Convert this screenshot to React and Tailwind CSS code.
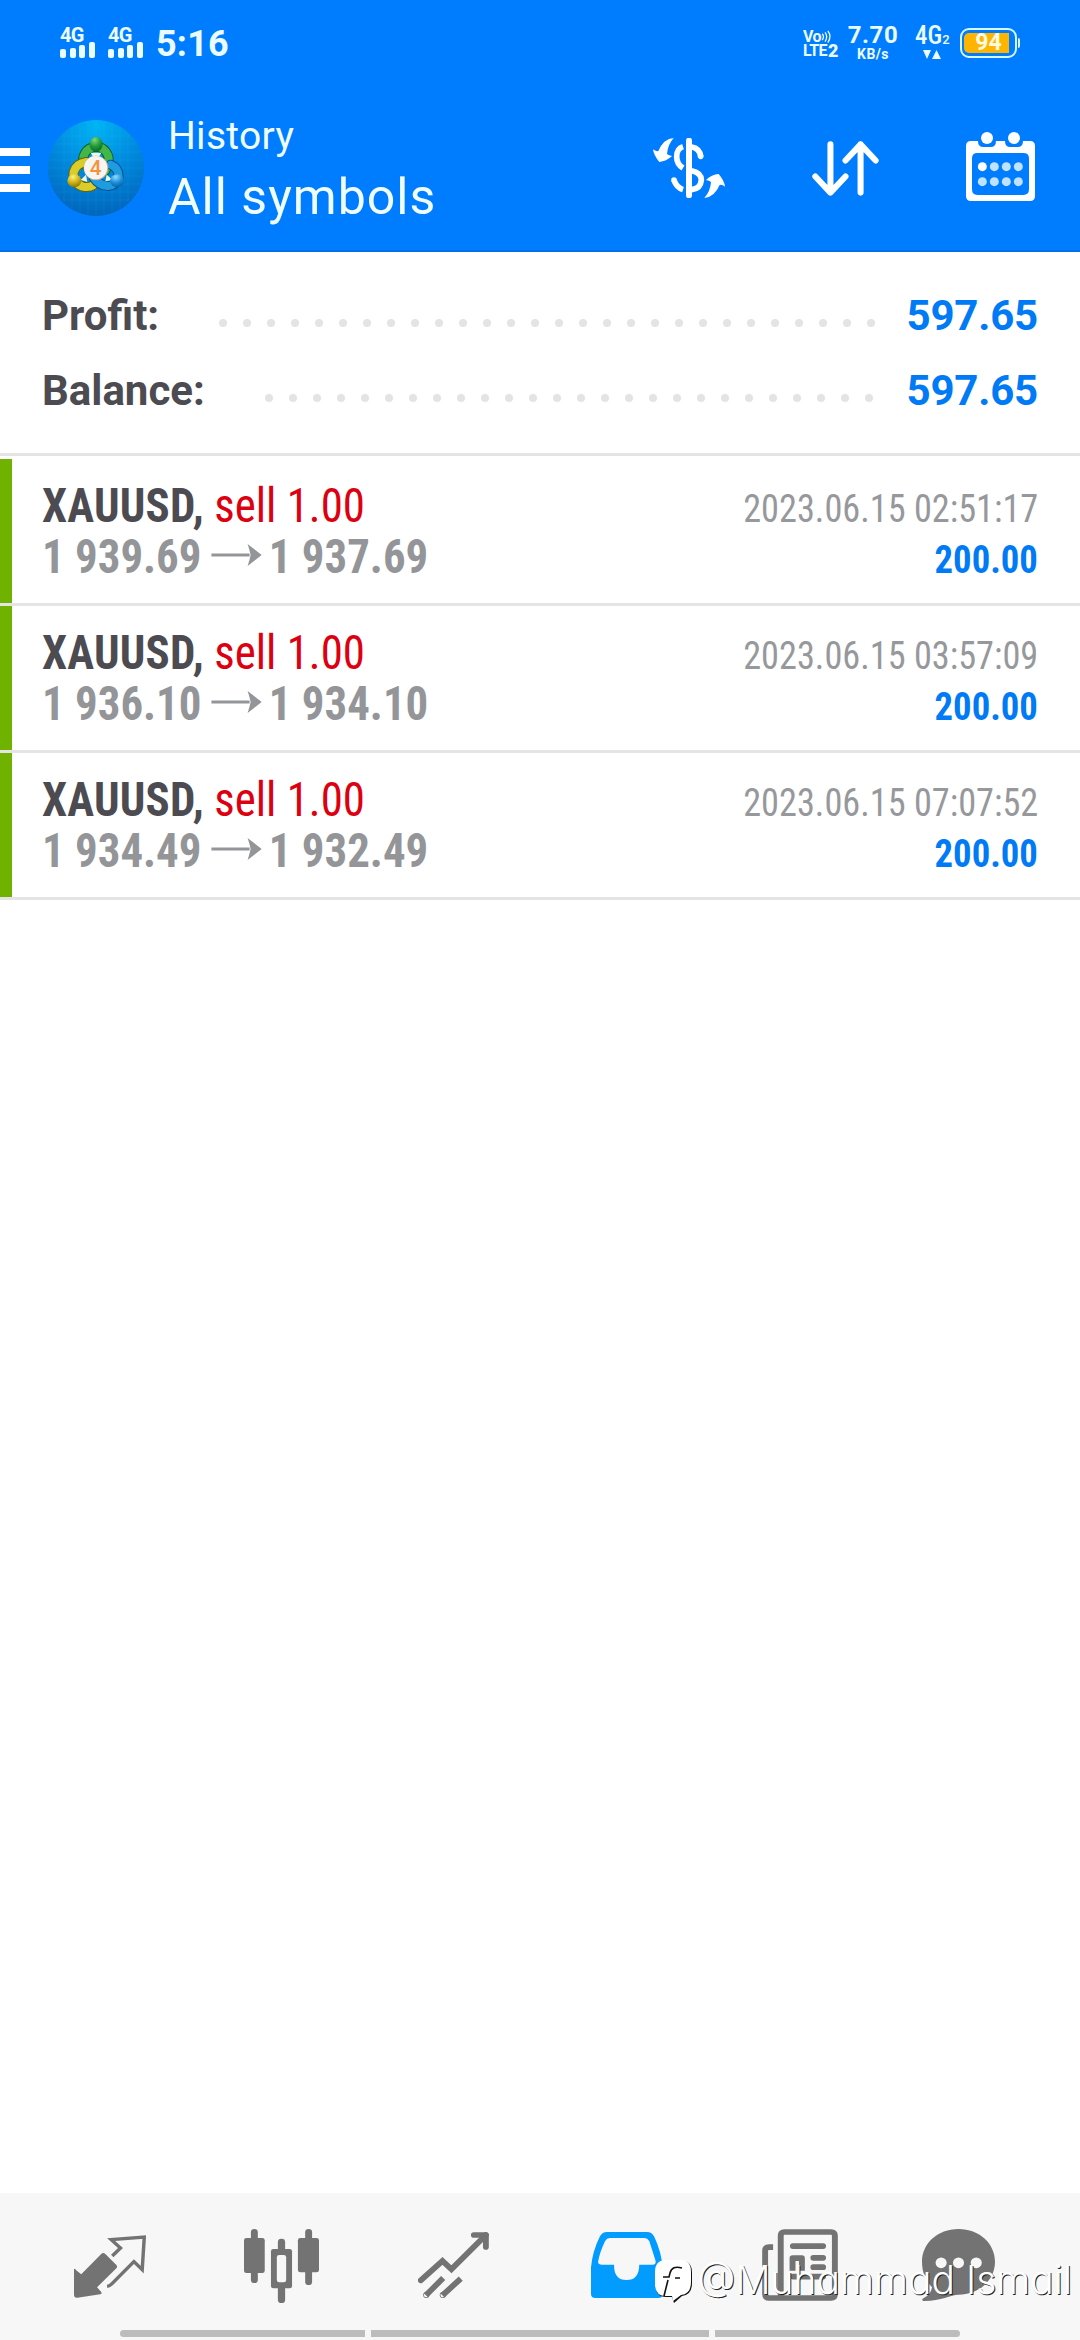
import React from 'react';

const SUMMARY = [
  { label: 'Profit:', value: '597.65', dots: 28 },
  { label: 'Balance:', value: '597.65', dots: 26 },
];

const DEALS = [
  { symbol: 'XAUUSD', side: 'sell', volume: '1.00', open: '1 939.69', close: '1 937.69', time: '2023.06.15 02:51:17', profit: '200.00' },
  { symbol: 'XAUUSD', side: 'sell', volume: '1.00', open: '1 936.10', close: '1 934.10', time: '2023.06.15 03:57:09', profit: '200.00' },
  { symbol: 'XAUUSD', side: 'sell', volume: '1.00', open: '1 934.49', close: '1 932.49', time: '2023.06.15 07:07:52', profit: '200.00' },
];

/* ── Status bar ── */

const Signal = () => (
  <div className="flex w-[35px] flex-col">
    <span className="h-[14px] text-[20px] leading-[14px] font-bold tracking-[-0.6px]">4G</span>
    <div className="flex h-4 items-end justify-between">
      <i className="h-[9px] w-1.5 rounded-xs bg-[#eafcff]" />
      <i className="h-[10px] w-1.5 rounded-xs bg-[#eafcff]" />
      <i className="h-[13px] w-1.5 rounded-xs bg-[#eafcff]" />
      <i className="h-4 w-1.5 rounded-xs bg-[#eafcff]" />
    </div>
  </div>
);

const Battery = () => (
  <div className="flex items-center gap-px">
    <div className="flex h-[30px] w-[57px] items-center rounded-[9px] border-2 border-[#d8f6ff] p-[2px]">
      <div className="flex h-5 w-[45px] items-center justify-center rounded-l-[5px] bg-[#ffb400] pl-1 text-[23px] font-bold text-[#fffbe0]">
        94
      </div>
    </div>
    <div className="h-2.5 w-[2px] rounded-r bg-[#d8f6ff]" />
  </div>
);

const StatusBar = () => (
  <div className="flex h-[84px] items-center pt-[2px] pr-[60px] pl-[60px] text-[#eafcff]">
    <Signal />
    <div className="w-[13px]" />
    <Signal />
    <span className="mt-px ml-[13px] text-[36px] font-bold tracking-[0.2px]">5:16</span>

    <div className="ml-auto flex items-center">
      <div className="flex w-[38px] flex-col">
        <div className="flex h-[14px] items-center">
          <span className="text-[16px] leading-[14px] font-bold tracking-[-0.6px]">Vo</span>
          <svg viewBox="0 0 10 14" className="h-[13px] w-2.5" fill="none" stroke="currentColor" strokeWidth="1.4">
            <path d="M1 4q2.500 3 0 7M4 2.500q3.500 4.500 0 10M7 1q4.500 6 0 12.500" />
          </svg>
        </div>
        <div className="flex h-[13px] items-center font-bold">
          <span className="text-[16px] leading-[13px] tracking-[-0.6px]">LTE</span>
          <span className="ml-px text-[18px] leading-[13px] font-black">2</span>
        </div>
      </div>
      <div className="ml-[8px] flex w-[48px] flex-col items-center">
        <span className="h-5 text-[24px] leading-5 font-bold tracking-[0.6px]">7.70</span>
        <span className="h-[17px] pt-[2px] text-[14px] leading-[14px] font-bold tracking-[0.4px]">KB/s</span>
      </div>
      <div className="ml-[18px] flex w-[35px] flex-col">
        <div className="flex h-5 items-baseline leading-5">
          <span className="text-[25px] leading-5 font-medium font-stretch-[85%]">4G</span>
          <span className="text-[13px] leading-5 font-medium">2</span>
        </div>
        <svg viewBox="0 0 18 10" className="mt-[4px] ml-[8px] h-2.5 w-[18px]" fill="currentColor">
          <path d="M0 0h8L4 9zM9 9h9L13.500 0z" />
        </svg>
      </div>
      <div className="ml-[10px]">
        <Battery />
      </div>
    </div>
  </div>
);

/* ── App bar ── */

const Logo = () => (
  <svg viewBox="24 24 288 288" className="size-24">
    <defs>
      <radialGradient id="disc" cx="0.5" cy="0.05" r="1">
        <stop offset="0" stopColor="#00b4f5" />
        <stop offset="0.5" stopColor="#0088dc" />
        <stop offset="1" stopColor="#0062b8" />
      </radialGradient>
      <radialGradient id="green" cx="0.4" cy="0.2" r="0.9">
        <stop offset="0" stopColor="#7fd67a" />
        <stop offset="0.5" stopColor="#1f9a3c" />
        <stop offset="1" stopColor="#05601f" />
      </radialGradient>
      <radialGradient id="yellow" cx="0.4" cy="0.2" r="0.9">
        <stop offset="0" stopColor="#fff27a" />
        <stop offset="0.5" stopColor="#d0b416" />
        <stop offset="1" stopColor="#7d6a00" />
      </radialGradient>
      <radialGradient id="blue" cx="0.4" cy="0.2" r="0.9">
        <stop offset="0" stopColor="#8fdcff" />
        <stop offset="0.5" stopColor="#1e90d8" />
        <stop offset="1" stopColor="#0058a0" />
      </radialGradient>
    </defs>
    <circle cx="168" cy="168" r="144" fill="url(#disc)" />
    <path
      d="M72 66v204M96 46v244M120 34v268M144 28v280M168 24v288M192 28v280M216 34v268M240 46v244M264 66v204M66 72h204M46 96h244M34 120h268M28 144h280M24 168h288M28 192h280M34 216h268M46 240h244M66 264h204"
      stroke="#5cc8ff"
      strokeOpacity="0.14"
      strokeWidth="2"
    />
    <g fill="none" strokeLinecap="round">
      <path d="M133 158a38 38 0 1 1 71 -4q0 10 -8 22" stroke="#0a5a2c" strokeWidth="30" />
      <path d="M133 158a38 38 0 1 1 71 -4q0 10 -8 22" stroke="#43b649" strokeWidth="24" />
      <path d="M139 150q-30 4 -38 30q-5 32 28 44q18 4 30 -4" stroke="#6d6200" strokeWidth="30" />
      <path d="M139 150q-30 4 -38 30q-5 32 28 44q18 4 30 -4" stroke="#d9cd2c" strokeWidth="24" />
      <path d="M212 158q24 10 24 36q-6 26 -32 28q-28 -2 -42 -24" stroke="#07508e" strokeWidth="30" />
      <path d="M212 158q24 10 24 36q-6 26 -32 28q-28 -2 -42 -24" stroke="#1f9be0" strokeWidth="24" />
    </g>
    <path d="M152 122h32l-8 14h-16zM122 204l16 -16 4 22zM196 208l4 -20 18 16z" fill="#e9fbe0" />
    <ellipse cx="168" cy="97" rx="20" ry="22" fill="url(#green)" />
    <ellipse cx="103" cy="206" rx="21" ry="19" fill="url(#yellow)" />
    <ellipse cx="231" cy="206" rx="21" ry="19" fill="url(#blue)" />
    <circle cx="168" cy="168" r="37" fill="#b9a98c" />
    <circle cx="167" cy="167" r="35" fill="#f7f5f2" />
    <text x="167" y="189" textAnchor="middle" fontFamily="Roboto, sans-serif" fontSize="62" fontWeight="500" fill="#f5923e">
      4
    </text>
  </svg>
);

const CurrencyIcon = () => (
  <svg viewBox="72 114 216 180" className="h-[60px] w-[72px]" fill="white">
    <path d="M134 114q-30 2 -46 39q-8 2 -16 -5q2 18 19 38q21 -2 38 -18q-10 -1 -15 -6q2 -28 20 -48z" />
    <path d="M226 294q30 -2 46 -39q8 -2 16 5q-2 -18 -19 -38q-21 2 -38 18q10 1 15 6q-2 28 -20 48z" />
    <path d="M180 122v164" stroke="white" strokeWidth="18" strokeLinecap="round" />
    <path
      d="M162 140q-19 6 -19 30q0 22 19 34M188 141q24 4 27 28M162 269q-19 -6 -27 -28M188 212q29 6 29 28q-2 26 -29 29"
      fill="none"
      stroke="white"
      strokeWidth="17"
    />
    <circle cx="215" cy="169" r="8.500" />
    <circle cx="135" cy="240" r="8.500" />
  </svg>
);

const SortIcon = () => (
  <svg viewBox="548 122 200 164" className="h-[55px] w-[67px]" fill="none" stroke="white" strokeWidth="18" strokeLinecap="round" strokeLinejoin="round">
    <path d="M603 132v144M558 228l45 48 45 -48M693 276V132M648 180l45 -48 45 48" />
  </svg>
);

const CalendarIcon = () => (
  <svg viewBox="1008 96 207 207" className="size-[69px]" fill="white">
    <path
      fillRule="evenodd"
      d="M1023 123h21q0 18 16 18h22q16 0 16 -18h27q0 18 16 18h22q16 0 16 -18h21q15 0 15 15v150q0 15 -15 15h-177q-15 0 -15 -15v-150q0 -15 15 -15zM1042 159q-16 0 -16 16v93q0 17 16 17h138q17 0 17 -17v-93q0 -16 -17 -16z"
    />
    <circle cx="1071" cy="114" r="18" />
    <circle cx="1152" cy="114" r="18" />
    <circle cx="1057" cy="200" r="13.500" />
    <g fill="#bfe3ff">
      <circle cx="1093" cy="200" r="13.500" />
      <circle cx="1129" cy="200" r="13.500" />
      <circle cx="1165" cy="200" r="13.500" />
      <circle cx="1057" cy="245" r="13.500" />
      <circle cx="1093" cy="245" r="13.500" />
      <circle cx="1129" cy="245" r="13.500" />
      <circle cx="1165" cy="245" r="13.500" />
    </g>
  </svg>
);

const AppBar = () => (
  <div className="flex h-[168px] items-center border-b-2 border-[#0070e6] pt-[2px] pr-[45px] text-[#f0fdff]">
    <div className="mt-1 flex w-[30px] flex-col gap-2.5">
      <i className="h-2 bg-white" />
      <i className="h-2 bg-white" />
      <i className="h-2 bg-white" />
    </div>
    <div className="ml-[18px]">
      <Logo />
    </div>
    <div className="mt-[4px] ml-[24px] flex flex-col">
      <span className="text-[39px] leading-[54px] tracking-[0.3px]">History</span>
      <span className="text-[50px] leading-[68px] tracking-[1px]">All symbols</span>
    </div>
    <div className="ml-auto flex items-center">
      <CurrencyIcon />
      <div className="ml-[87px]">
        <SortIcon />
      </div>
      <div className="-mt-[3px] ml-[87px]">
        <CalendarIcon />
      </div>
    </div>
  </div>
);

/* ── Totals with dotted leaders ── */

const SummaryRow = ({ label, value, dots }) => (
  <div className="flex h-[75px] items-center text-[42px] font-bold">
    <span className="text-[#4c4b51]">{label}</span>
    <div className="mt-[15px] ml-[60px] flex gap-4">
      {Array.from({ length: dots }, (_, i) => (
        <i key={i} className="size-2 rounded-full bg-[#e4e4e4]" />
      ))}
    </div>
    <span className="ml-auto text-[#007af5] tracking-[-0.2px]">{value}</span>
  </div>
);

/* ── Deal row ── */

const PriceArrow = () => (
  <svg viewBox="0 0 50 36" preserveAspectRatio="none" className="h-9 w-[54px]" fill="#949599">
    <path d="M0 16.500h38V19.500H0z" />
    <path d="M50 18 36 7q2 6 3 11q-1 5 -3 11z" />
  </svg>
);

const DealRow = ({ deal }) => (
  <div className="flex h-[147px] border-b-3 border-[#e4e4e4]">
    <div className="w-3 bg-[#6fb200]" />
    <div className="flex-1 pt-[21px] pr-[42px] pl-[30px] font-stretch-[75%]">
      <div className="flex h-[51px] items-baseline justify-between text-[48px] leading-[51px]">
        <div className="flex origin-left scale-x-[0.935] items-baseline">
          <span className="font-bold tracking-[0.2px] text-[#4c4b51]">{deal.symbol},</span>
          <span className="ml-[11px] text-[#dc0010]">
            {deal.side} {deal.volume}
          </span>
        </div>
        <span className="origin-right scale-x-[0.93] text-[39px] text-[#97989c]">{deal.time}</span>
      </div>
      <div className="flex h-[51px] items-baseline justify-between text-[48px] leading-[51px] font-bold text-[#949599]">
        <div className="flex origin-left scale-x-[0.935] items-baseline">
          <span>{deal.open}</span>
          <div className="mr-[8px] ml-[10px]">
            <PriceArrow />
          </div>
          <span>{deal.close}</span>
        </div>
        <span className="origin-right scale-x-[0.94] text-[39px] text-[#007af5]">{deal.profit}</span>
      </div>
    </div>
  </div>
);

/* ── Bottom navigation ── */

const BottomNav = () => (
  <nav className="flex h-[137px] items-start bg-[#f7f7f7] pt-9 pl-[74px] text-[#737373]">
    {/* Quotes */}
    <svg viewBox="215 165 209 189" preserveAspectRatio="none" className="mt-1.5 h-[63px] w-[72px]" fill="currentColor">
      <path d="M300 219q3 0 6 3l32 33q4 5 0 10l-56 57 12 14q3 6 -3 7l-66 10q-10 1 -10 -9v-78q4 0 8 6l13 11 58 -61q3 -3 6 -3z" />
      <path d="M326 228l24 -24 -27 -25 96 -8 -6 98 -24 -24 -65 67q-5 6 -13 7" fill="none" stroke="currentColor" strokeWidth="10" />
    </svg>
    {/* Charts */}
    <svg viewBox="709 147 217 222" preserveAspectRatio="none" className="ml-[98px] h-[74px] w-[75px]" fill="currentColor">
      <rect x="729" y="147" width="20" height="162" rx="10" />
      <rect x="709" y="174" width="60" height="105" rx="7" />
      <rect x="886" y="147" width="20" height="168" rx="10" />
      <rect x="865" y="174" width="61" height="103" rx="7" />
      <rect x="807" y="176" width="21" height="193" rx="10" />
      <rect x="787" y="207" width="61" height="118" rx="7" />
      <rect x="804" y="225" width="27" height="82" rx="7" fill="#f7f7f7" />
    </svg>
    {/* Trade */}
    <svg viewBox="1214 156 206 198" preserveAspectRatio="none" className="mt-[3px] ml-[99px] h-[66px] w-[71px]" fill="none" stroke="currentColor" strokeWidth="17">
      <path d="M1222 301l63 -58 26 25 100 -103" strokeLinecap="round" />
      <path d="M1376 165h35v36" strokeLinecap="round" strokeLinejoin="round" />
      <path d="M1287 294l-50 52M1338 296l-53 50" />
      <circle cx="1238" cy="345" r="1" strokeWidth="16" />
      <circle cx="1286" cy="345" r="1" strokeWidth="16" />
    </svg>
    {/* History */}
    <svg viewBox="147 156 209 198" preserveAspectRatio="none" className="mt-[3px] ml-[102px] h-[66px] w-[72px]" fill="#029bff">
      <path
        fillRule="evenodd"
        d="M147 262q4 -47 26 -93q7 -13 20 -13h117q13 0 20 13q21 46 25 93v79q0 13 -13 13h-182q-13 0 -13 -13zM168 243q4 -25 20 -60q5 -9 14 -9h100q9 0 14 9l18 58q3 13 -8 13h-39q0 46 -37 46t-36 -46h-35q-13 0 -11 -11z"
      />
    </svg>
    {/* News */}
    <svg viewBox="645 147 219 215" preserveAspectRatio="none" className="ml-[99px] h-[72px] w-[76px]" fill="none" stroke="currentColor" strokeWidth="17">
      <path d="M699 345V167q0 -11 11 -11h134q11 0 11 11v175q0 11 -11 11H666q-12 0 -12 -12V212q0 -11 11 -11h12" />
      <path d="M734 198h87M793 233h28M793 261h28M734 289h87" strokeLinecap="round" />
      <path d="M733 272v-38h27v38" strokeLinejoin="round" />
    </svg>
    {/* Messages */}
    <svg viewBox="1108 147 210 215" preserveAspectRatio="none" className="ml-[84px] h-[72px] w-[73px]" fill="currentColor">
      <path d="M1213 147c60 0 105 43 105 98s-45 98 -105 98c-22 0 -50 19 -98 19c-8 0 -8 -6 -2 -9c14 -7 22 -18 24 -32c-18 -18 -29 -44 -29 -76c0 -55 45 -98 105 -98z" />
      <g fill="#f7f7f7">
        <circle cx="1163" cy="248" r="16" />
        <circle cx="1213" cy="248" r="16" />
        <circle cx="1264" cy="248" r="16" />
      </g>
    </svg>
  </nav>
);

const HomeBar = () => (
  <div className="flex h-2.5 gap-1.5 bg-[#f7f7f7] px-[120px]">
    <i className="h-[7px] w-[245px] rounded-l-full bg-[#bcbcbc]" />
    <i className="h-[7px] flex-1 bg-[#bcbcbc]" />
    <i className="h-[7px] w-[245px] rounded-r-full bg-[#bcbcbc]" />
  </div>
);

/* Author tag laid over the navigation */
const AuthorTag = () => (
  <div className="absolute right-[8px] bottom-[36px] flex items-center whitespace-nowrap">
    <svg viewBox="0 0 38 44" className="mt-[4px] h-11 w-[38px]">
      <path d="M12 1h15q10 0 10 12v10q0 12 -10 13l-8 7 -2 -6h-6q-10 0 -10 -11V13Q1 1 12 1z" fill="#111" />
      <path d="M11 0h15q10 0 10 12v10q0 12 -10 13l-8 6 -1 -5h-6q-11 0 -11 -12V12Q0 0 11 0z" fill="#fff" />
      <path d="M27 8q-10 -3 -12 5l-1 4H8M13 20l-4 16M20 18h5" fill="none" stroke="#111" strokeWidth="1.6" />
    </svg>
    <span className="ml-[5px] font-['Inter'] text-[39px] leading-[48px] font-light text-white [font-feature-settings:'cv11'] [text-shadow:1px_1px_0_#222]">
      @Muhammad Ismail
    </span>
  </div>
);

export default function App() {
  return (
    <div className="relative flex h-[2340px] w-[1080px] flex-col overflow-hidden bg-white font-['Roboto',sans-serif]">
      <header className="bg-[#007dff]">
        <StatusBar />
        <AppBar />
      </header>

      <section className="h-[204px] border-b-3 border-[#e4e4e4] pt-[26px] pr-[42px] pl-[42px]">
        {SUMMARY.map((row) => (
          <SummaryRow key={row.label} {...row} />
        ))}
      </section>

      <main className="flex-1 pt-[3px]">
        {DEALS.map((deal) => (
          <DealRow key={deal.time} deal={deal} />
        ))}
      </main>

      <BottomNav />
      <HomeBar />
      <AuthorTag />
    </div>
  );
}
